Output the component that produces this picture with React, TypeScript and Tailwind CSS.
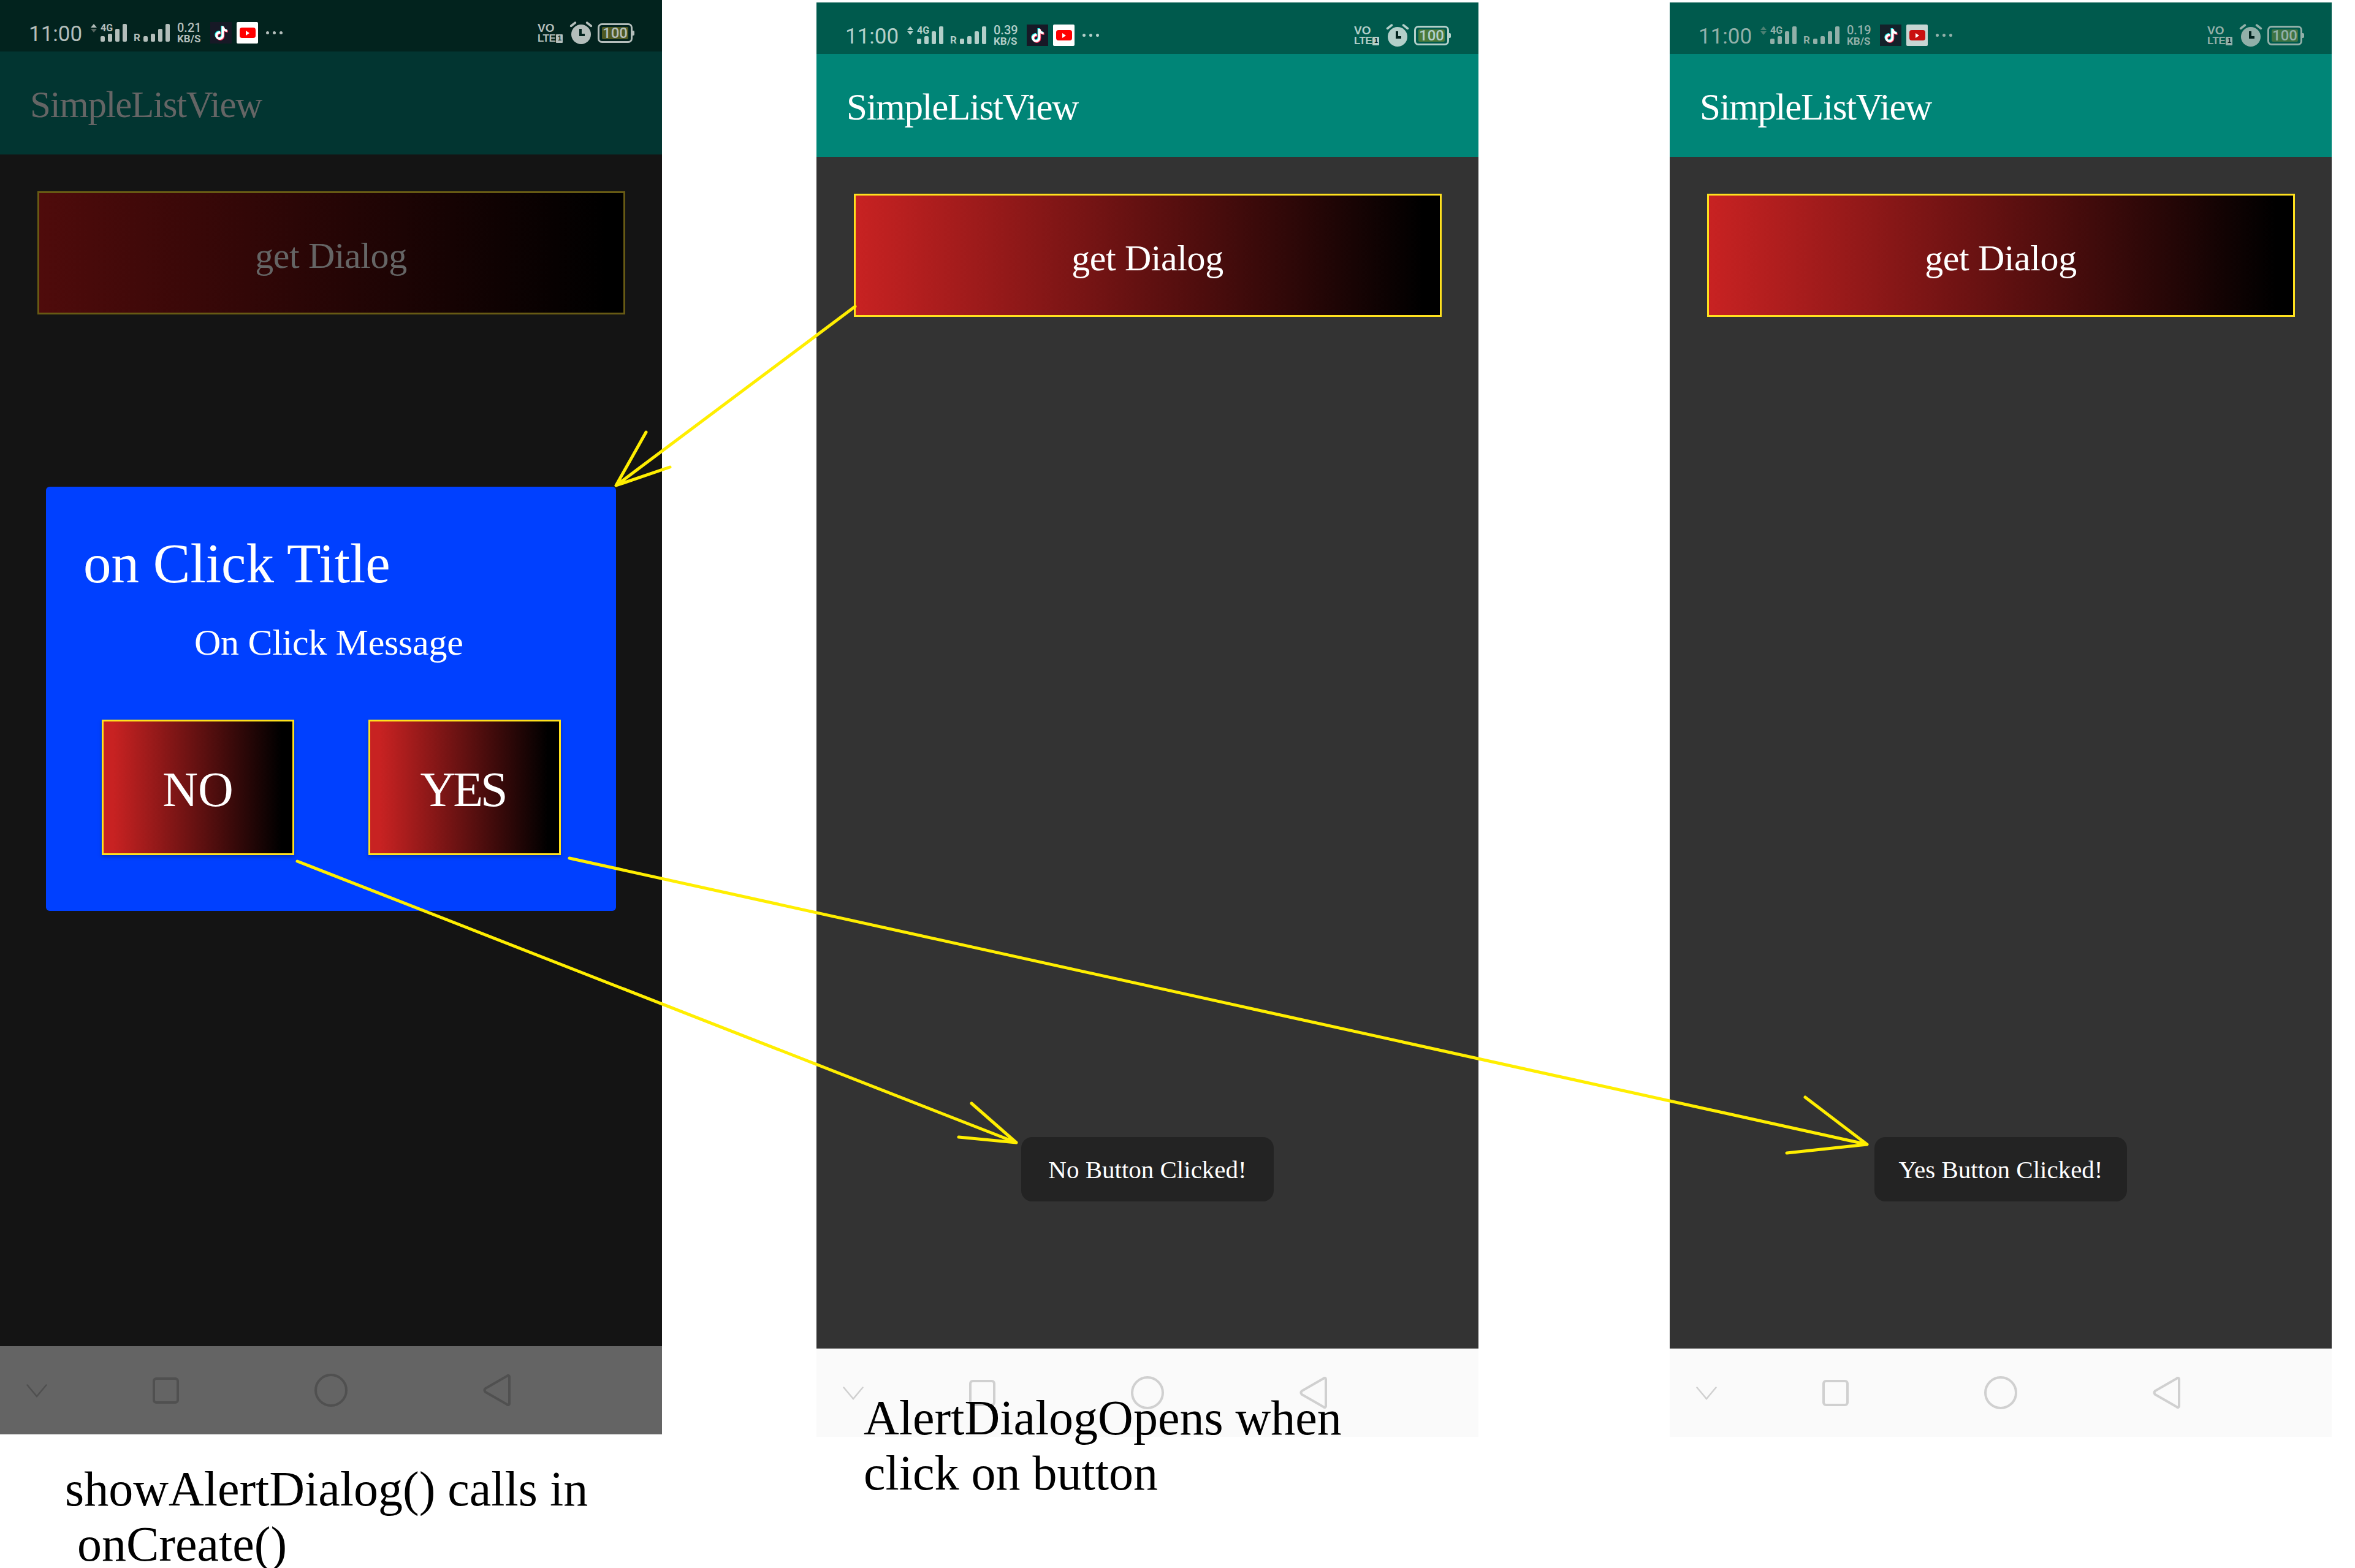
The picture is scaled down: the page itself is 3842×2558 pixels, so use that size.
import React from "react";
import { FaTiktok } from "react-icons/fa";

type Theme = {
  status: string;
  appBar: string;
  body: string;
  nav: string;
  navIcon: string;
  ink: string;
  title: string;
  btnFrom: string;
  btnBorder: string;
  batteryFill: string;
  tikBg: string;
  ytBg: string;
  ytRed: string;
  upDim: string;
  downDim: string;
};

const dark: Theme = {
  status: "bg-[#02231e]",
  appBar: "bg-[#023531]",
  body: "bg-[#141414]",
  nav: "bg-[#646464]",
  navIcon: "#505050",
  ink: "text-[#b4bebb]",
  title: "text-[#656565]",
  btnFrom: "from-[#4f0b0b]",
  btnBorder: "border-[#675a14]",
  batteryFill: "bg-[#4f5a22]",
  tikBg: "bg-[#171926]",
  ytBg: "bg-white",
  ytRed: "bg-[#f00]",
  upDim: "border-b-[#b4bebb]",
  downDim: "border-t-[#55645f]",
};

const light: Theme = {
  status: "bg-[#005a4d]",
  appBar: "bg-[#008577]",
  body: "bg-[#333333]",
  nav: "bg-[#fafafa]",
  navIcon: "#d0d0d0",
  ink: "text-[#b3cfc9]",
  title: "text-white",
  btnFrom: "from-[#c82222]",
  btnBorder: "border-[#ffe11f]",
  batteryFill: "bg-[#4c7a3a]",
  tikBg: "bg-[#171926]",
  ytBg: "bg-white",
  ytRed: "bg-[#f00]",
  upDim: "border-b-[#b3cfc9]",
  downDim: "border-t-[#b3cfc9]",
};

const faded: Theme = {
  ...light,
  ink: "text-[#92b0a9]",
  batteryFill: "bg-[#3f7443]",
  tikBg: "bg-[#14212a]",
  ytBg: "bg-[#c7d6d3]",
  ytRed: "bg-[#c91010]",
  upDim: "border-b-[#4d8073]",
  downDim: "border-t-[#4d8073]",
};

const Bars = () => (
  <div className="flex items-end gap-[5px]">
    <div className="h-[9px] w-[7px] rounded-[2px] bg-current" />
    <div className="h-[13px] w-[7px] rounded-[2px] bg-current" />
    <div className="h-[21px] w-[7px] rounded-[2px] bg-current" />
    <div className="h-[29px] w-[7px] rounded-[2px] bg-current" />
  </div>
);

const StatusBar = ({ theme, speed }: { theme: Theme; speed: string }) => (
  <div className={`flex h-[84px] items-start pl-[47px] font-['Roboto',sans-serif] ${theme.status} ${theme.ink}`}>
    <div className="mt-[35px] w-[87px] text-[35px] leading-[41px]">11:00</div>
    <div className="ml-[14px] mt-[39px] flex w-[10px] flex-col gap-[2px]">
      <div className={`h-0 w-0 border-x-[5px] border-b-[6px] border-x-transparent ${theme.upDim}`} />
      <div className={`h-0 w-0 border-x-[5px] border-t-[6px] border-x-transparent ${theme.downDim}`} />
    </div>
    <div className="relative ml-[6px] mt-[39px] h-[29px] w-[43px]">
      <Bars />
      <div className="absolute left-0 top-[-1px] text-[16px] font-bold leading-[15px]">4G</div>
    </div>
    <div className="ml-[11px] mt-[53px] w-[16px] text-[17px] font-bold leading-[17px]">R</div>
    <div className="mt-[39px]">
      <Bars />
    </div>
    <div className="ml-[12px] mt-[36px] flex w-[41px] flex-col">
      <div className="text-[20px] font-medium leading-[19px]">{speed}</div>
      <div className="text-[17px] font-bold leading-[16px]">KB/S</div>
    </div>
    <div className={`ml-[13px] mt-[36px] flex h-[35px] w-[35px] items-center justify-center ${theme.tikBg}`}>
      <div className="relative h-[22px] w-[22px]">
        <FaTiktok className="absolute left-[-1px] top-[-1px] text-[22px] text-[#25f4ee]" />
        <FaTiktok className="absolute left-[1px] top-[1px] text-[22px] text-[#fe2c55]" />
        <FaTiktok className="absolute left-0 top-0 text-[22px] text-white" />
      </div>
    </div>
    <div className={`ml-[8px] mt-[36px] flex h-[35px] w-[35px] items-center justify-center rounded-[2px] ${theme.ytBg}`}>
      <div className={`flex h-[17px] w-[26px] items-center justify-center rounded-[4px] ${theme.ytRed}`}>
        <div className="ml-[1px] h-0 w-0 border-y-[4px] border-l-[6px] border-y-transparent border-l-white" />
      </div>
    </div>
    <div className="ml-[13px] mt-[51px] flex gap-[6px]">
      <div className="h-[5px] w-[5px] rounded-full bg-current" />
      <div className="h-[5px] w-[5px] rounded-full bg-current" />
      <div className="h-[5px] w-[5px] rounded-full bg-current" />
    </div>
    <div className="ml-auto mr-[45px] flex items-start">
      <div className="mt-[37px] flex w-[42px] flex-col font-['Liberation_Sans',sans-serif] font-bold">
        <div className="text-[19px] leading-[18px]">VO</div>
        <div className="flex items-center gap-[1px] text-[17px] leading-[15px] tracking-[-0.5px]">
          LTE
          <span className="flex h-[14px] w-[11px] items-center justify-center rounded-[1px] bg-current">
            <span className="text-[11px] leading-[11px] text-[#02231e]">1</span>
          </span>
        </div>
      </div>
      <svg className="ml-[10px] mt-[34px]" width="38" height="38" viewBox="0 0 38 38">
        <circle cx="19" cy="22" r="16" fill="currentColor" />
        <path d="M18 13v10h7" fill="none" stroke="#02231e" strokeWidth="4" />
        <path d="M2.5 8.5 9.5 3M35.5 8.5 28.5 3" fill="none" stroke="currentColor" strokeWidth="3.5" strokeLinecap="round" />
      </svg>
      <div className="ml-[8px] mt-[38px] flex items-center">
        <div className="flex h-[32px] w-[57px] items-center justify-center rounded-[7px] border-[3px] border-current">
          <div className={`flex h-[20px] w-[43px] items-center justify-center rounded-[2px] text-[24px] font-medium leading-[20px] ${theme.batteryFill}`}>
            100
          </div>
        </div>
        <div className="h-[8px] w-[3px] rounded-r-[2px] bg-current" />
      </div>
    </div>
  </div>
);

const NavBar = ({ theme }: { theme: Theme }) => (
  <div className={`flex h-[144px] items-center pl-[43px] ${theme.nav}`}>
    <svg width="34" height="22" viewBox="0 0 34 22" className="mt-[1px]">
      <path d="M1.5 1.5 17 20 32.5 1.5" fill="none" stroke={theme.navIcon} strokeWidth="2.5" strokeLinecap="round" />
    </svg>
    <svg width="43" height="43" viewBox="0 0 43 43" className="ml-[172px]">
      <rect x="2" y="2" width="39" height="39" rx="4" fill="none" stroke={theme.navIcon} strokeWidth="4" />
    </svg>
    <svg width="54" height="54" viewBox="0 0 54 54" className="ml-[221px]">
      <circle cx="27" cy="27" r="25" fill="none" stroke={theme.navIcon} strokeWidth="4" />
    </svg>
    <svg width="46" height="52" viewBox="0 0 46 52" className="ml-[221px]">
      <path d="M43 4v44c0 2-2 3-4 1L4 29c-2-2-2-4 0-6L39 3c2-2 4-1 4 1Z" fill="none" stroke={theme.navIcon} strokeWidth="4" />
    </svg>
  </div>
);

const GetDialog = ({ theme }: { theme: Theme }) => (
  <div
    className={`mx-auto flex h-[201px] w-[959px] items-center justify-center border-[3px] bg-linear-to-r/srgb to-black to-[97%] pt-[8px] text-[60px] tracking-[-0.4px] ${theme.btnFrom} ${theme.btnBorder} ${theme.title}`}
  >
    get Dialog
  </div>
);

const DialogButton = ({ label, className }: { label: string; className: string }) => (
  <div
    className={`flex h-[221px] w-[314px] items-center justify-center border-[3px] border-[#ffe11f] bg-linear-to-r/srgb from-[#c82222] from-[5%] to-black to-[94%] pt-[6px] text-[80px] text-white shadow-[0_3px_6px_rgba(0,0,0,0.25)] ${className}`}
  >
    {label}
  </div>
);

const AlertBox = () => (
  <div className="mx-auto mt-[281px] h-[692px] w-[930px] rounded-[6px] bg-[#0040ff] text-white">
    <div className="pl-[61px] pt-[76px] text-[91px] leading-[100px]">on Click Title</div>
    <div className="pl-[242px] pt-[44px] text-[60px] leading-[68px] tracking-[-0.3px]">On Click Message</div>
    <div className="flex pl-[91px] pt-[92px]">
      <DialogButton label="NO" className="" />
      <DialogButton label="YES" className="ml-[121px] pr-[6px] tracking-[-4px]" />
    </div>
  </div>
);

const Toast = ({ label }: { label: string }) => (
  <div className="mb-[240px] mt-auto flex h-[105px] w-[412px] items-center justify-center self-center rounded-[18px] bg-[#232323] pt-[3px] text-[41px] text-white">
    {label}
  </div>
);

const Phone = ({ theme, speed, children }: { theme: Theme; speed: string; children: React.ReactNode }) => (
  <div className="w-[1080px] font-['Liberation_Serif',serif]">
    <StatusBar theme={theme} speed={speed} />
    <div className={`flex h-[168px] items-center pl-[49px] pt-[6px] text-[61px] tracking-[-1.3px] ${theme.appBar} ${theme.title}`}>
      SimpleListView
    </div>
    <div className={`flex h-[1944px] flex-col pt-[60px] ${theme.body}`}>
      <GetDialog theme={theme} />
      {children}
    </div>
    <NavBar theme={theme} />
  </div>
);

const Arrows = () => (
  <svg className="absolute left-0 top-0" width="3842" height="2558" viewBox="0 0 3842 2558">
    <g fill="none" stroke="#ffee00" strokeWidth="5" strokeLinecap="round" strokeLinejoin="round">
      <path d="M1395 500 1005 792M1054 705 1005 792 1093 762" />
      <path d="M485 1405 1658 1864M1585 1800 1658 1864 1564 1855" />
      <path d="M929 1400 3046 1867M2945 1790 3046 1867 2915 1881" />
    </g>
  </svg>
);

export default function App() {
  return (
    <div className="relative flex h-[2558px] w-[3842px] overflow-hidden bg-white font-['Liberation_Serif',serif] text-black">
      <div className="w-[1080px]">
        <Phone theme={dark} speed="0.21">
          <AlertBox />
        </Phone>
        <div className="ml-[106px] mt-[44px] whitespace-pre text-[80px] leading-[90px]">
          {"showAlertDialog() calls in\n onCreate()"}
        </div>
      </div>
      <div className="ml-[252px] mt-[4px] w-[1080px]">
        <Phone theme={light} speed="0.39">
          <Toast label="No Button Clicked!" />
        </Phone>
        <div className="relative ml-[77px] mt-[-76px] whitespace-pre text-[80px] leading-[90px]">
          {"AlertDialogOpens when\nclick on button"}
        </div>
      </div>
      <div className="ml-[312px] mt-[4px] w-[1080px]">
        <Phone theme={faded} speed="0.19">
          <Toast label="Yes Button Clicked!" />
        </Phone>
      </div>
      <Arrows />
    </div>
  );
}
